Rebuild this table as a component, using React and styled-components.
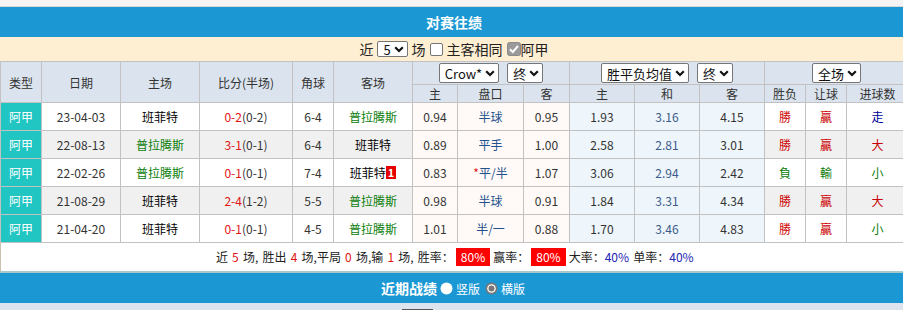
import React from "react";
import styled, { createGlobalStyle } from "styled-components";

const Global = createGlobalStyle`
  html, body { margin: 0; padding: 0; background: #ffffff; overflow: hidden; }
  body { font-family: "Noto Sans CJK SC", "Noto Sans", sans-serif; font-size: 12px; color: #333; }
`;

const Page = styled.div`
  width: 908px;
`;

const TopGap = styled.div`
  height: 6px;
  background: #f4f4f4;
  border-bottom: 1px solid #d9d9d9;
`;

const BlueBar = styled.div`
  height: ${(p) => p.$h}px;
  background: #1b97d4;
  color: #fff;
  display: flex;
  align-items: center;
  justify-content: center;
  gap: 3px;
`;

const BarTitle = styled.span`
  font-size: 14px;
  font-weight: bold;
`;

const FilterBar = styled.div`
  height: 24px;
  background: #feefd3;
  display: flex;
  align-items: center;
  justify-content: center;
  font-size: 14px;
  color: #222;
  gap: 4px;
`;

const Sel = styled.span`
  display: inline-flex;
  align-items: center;
  justify-content: space-between;
  box-sizing: border-box;
  height: ${(p) => p.$h || 20}px;
  padding: 0 3px 0 5px;
  border: 1px solid #767676;
  border-radius: 2px;
  background: #fff;
  font-size: 13px;
  color: #111;
  gap: 3px;
  line-height: 1;
`;

const Chevron = () => (
  <svg width="10" height="7" viewBox="0 0 10 7">
    <path d="M1.2 1.3 L5 5 L8.8 1.3" fill="none" stroke="#111" strokeWidth="2.2" />
  </svg>
);

const Select = ({ children, h }) => (
  <Sel $h={h}>
    <span>{children}</span>
    <Chevron />
  </Sel>
);

const Box = styled.span`
  display: inline-block;
  width: 13px;
  height: 13px;
  box-sizing: border-box;
  border: 1px solid #767676;
  border-radius: 2px;
  background: #fff;
`;

const CheckedBox = () => (
  <svg width="14" height="14" viewBox="0 0 14 14">
    <rect x="0.5" y="0.5" width="13" height="13" rx="2" fill="#9a9a9a" stroke="#8a8a8a" />
    <path d="M3 7.2 L5.8 10 L11 4" fill="none" stroke="#fff" strokeWidth="2" />
  </svg>
);

const Table = styled.table`
  border-collapse: collapse;
  table-layout: fixed;
  width: 908px;
  border-left: 1px solid #b9b9b9;
`;

const HRow = styled.tr`
  height: ${(p) => p.$h}px;
`;

const Th = styled.th`
  background: #dbe4ee;
  border: 1px solid #c2c2c2;
  font-weight: normal;
  font-size: 12px;
  color: #333;
  padding: 0;
  text-align: center;
  vertical-align: middle;
`;

const SelGroup = styled.div`
  display: flex;
  justify-content: center;
  gap: 8px;
`;

const Row = styled.tr`
  height: 28px;
`;

const Td = styled.td`
  border: 1px solid #c2c2c2;
  padding: 0;
  text-align: center;
  vertical-align: middle;
  font-size: 12px;
  color: ${(p) => p.$c || "#333"};
  background: ${(p) => p.$bg || (p.$alt ? "#f0f0f0" : "#ffffff")};
  white-space: nowrap;
`;

const TypeTd = styled(Td)`
  background: #21c5c2;
  color: #fff;
`;

const Red = styled.span`
  color: #e31313;
`;

const Star = styled.span`
  color: #e31313;
`;

const Card = styled.span`
  display: inline-block;
  background: #e60000;
  color: #fff;
  font-weight: bold;
  font-size: 11px;
  line-height: 13px;
  padding: 0 2px;
  vertical-align: 1px;
`;

const SummaryTd = styled.td`
  height: 28px;
  padding: 0;
  text-align: center;
  vertical-align: middle;
  font-size: 12px;
  color: #222;
  word-spacing: 1.5px;
  border-left: 1px solid #c9c2ae;
  border-bottom: 2px solid #a7c7c9;
`;

const Num = styled.span`
  color: #e31313;
`;

const Rate = styled.span`
  display: inline-block;
  background: #ff0000;
  color: #fff;
  padding: 0 5px;
  line-height: 18px;
  margin: 0 3px 0 2px;
`;

const Blue = styled.span`
  color: #1b25b5;
`;

const RadioLabel = styled.span`
  font-size: 12px;
  margin-right: 2px;
`;

const Radio = ({ checked }) =>
  checked ? (
    <svg width="13" height="13" viewBox="0 0 13 13">
      <circle cx="6.5" cy="6.5" r="6" fill="#777" />
      <circle cx="6.5" cy="6.5" r="4.3" fill="#fff" />
      <circle cx="6.5" cy="6.5" r="3" fill="#777" />
    </svg>
  ) : (
    <svg width="13" height="13" viewBox="0 0 13 13">
      <circle cx="6.5" cy="6.5" r="6" fill="#fff" />
    </svg>
  );

const Bottom = styled.div`
  height: 12px;
  background: #dde4ee;
  position: relative;
`;

const BottomTab = styled.span`
  position: absolute;
  left: 402px;
  top: 6px;
  width: 31px;
  height: 10px;
  background: #fff;
  border: 1px solid #555;
  box-sizing: border-box;
`;

const cols = [41, 79, 79, 93, 41, 79, 45, 66, 46, 65, 65, 65, 41, 41, 62];

const GREEN = "#0b7d0b";
const RC = "#cc0000";
const NAVY = "#000099";
const PINK = "#fffaf7";
const LBLUE = "#eef6fb";

const rows = [
  { date: "23-04-03", home: "班菲特", score: "0-2", half: "(0-2)", corner: "6-4", away: "普拉腾斯", o: ["0.94", "半球", "0.95"], e: ["1.93", "3.16", "4.15"], r: [["勝", RC], ["贏", RC], ["走", NAVY]] },
  { date: "22-08-13", home: "普拉腾斯", score: "3-1", half: "(0-1)", corner: "6-4", away: "班菲特", o: ["0.89", "平手", "1.00"], e: ["2.58", "2.81", "3.01"], r: [["勝", RC], ["贏", RC], ["大", RC]] },
  { date: "22-02-26", home: "普拉腾斯", score: "0-1", half: "(0-1)", corner: "7-4", away: "班菲特", card: "1", star: true, o: ["0.83", "平/半", "1.07"], e: ["3.06", "2.94", "2.42"], r: [["負", GREEN], ["輸", GREEN], ["小", GREEN]] },
  { date: "21-08-29", home: "班菲特", score: "2-4", half: "(1-2)", corner: "5-5", away: "普拉腾斯", o: ["0.98", "半球", "0.91"], e: ["1.84", "3.31", "4.34"], r: [["勝", RC], ["贏", RC], ["大", RC]] },
  { date: "21-04-20", home: "班菲特", score: "0-1", half: "(0-1)", corner: "4-5", away: "普拉腾斯", o: ["1.01", "半/一", "0.88"], e: ["1.70", "3.46", "4.83"], r: [["勝", RC], ["贏", RC], ["小", GREEN]] },
];

const teamColor = (t) => (t === "普拉腾斯" ? GREEN : "#000");

export default function App() {
  return (
    <Page>
      <Global />
      <TopGap />
      <BlueBar $h={30}>
        <BarTitle>对赛往绩</BarTitle>
      </BlueBar>
      <FilterBar>
        <span>近</span>
        <Select h={16}>5</Select>
        <span>场</span>
        <Box />
        <span>主客相同</span>
        <CheckedBox />
        <span style={{ marginLeft: -4 }}>阿甲</span>
      </FilterBar>
      <Table>
        <colgroup>
          {cols.map((w, i) => (
            <col key={i} style={{ width: w }} />
          ))}
        </colgroup>
        <thead>
          <HRow $h={23}>
            <Th rowSpan={2}>类型</Th>
            <Th rowSpan={2}>日期</Th>
            <Th rowSpan={2}>主场</Th>
            <Th rowSpan={2}>比分(半场)</Th>
            <Th rowSpan={2}>角球</Th>
            <Th rowSpan={2}>客场</Th>
            <Th colSpan={3}>
              <SelGroup>
                <Select>Crow*</Select>
                <Select>终</Select>
              </SelGroup>
            </Th>
            <Th colSpan={3}>
              <SelGroup>
                <Select>胜平负均值</Select>
                <Select>终</Select>
              </SelGroup>
            </Th>
            <Th colSpan={3}>
              <SelGroup>
                <Select>全场</Select>
              </SelGroup>
            </Th>
          </HRow>
          <HRow $h={18}>
            <Th>主</Th>
            <Th>盘口</Th>
            <Th>客</Th>
            <Th>主</Th>
            <Th>和</Th>
            <Th>客</Th>
            <Th>胜负</Th>
            <Th>让球</Th>
            <Th>进球数</Th>
          </HRow>
        </thead>
        <tbody>
          {rows.map((r, i) => {
            const alt = i % 2 === 1;
            return (
              <Row key={r.date}>
                <TypeTd>阿甲</TypeTd>
                <Td $alt={alt}>{r.date}</Td>
                <Td $alt={alt} $c={teamColor(r.home)}>{r.home}</Td>
                <Td $alt={alt}>
                  <Red>{r.score}</Red>
                  {r.half}
                </Td>
                <Td $alt={alt}>{r.corner}</Td>
                <Td $alt={alt} $c={teamColor(r.away)}>
                  {r.away}
                  {r.card && <Card>{r.card}</Card>}
                </Td>
                <Td $bg={PINK}>{r.o[0]}</Td>
                <Td $bg={PINK} $c="#24508c">
                  {r.star && <Star>*</Star>}
                  {r.o[1]}
                </Td>
                <Td $bg={PINK}>{r.o[2]}</Td>
                <Td $bg={LBLUE}>{r.e[0]}</Td>
                <Td $bg={LBLUE} $c="#3c5a8a">{r.e[1]}</Td>
                <Td $bg={LBLUE}>{r.e[2]}</Td>
                {r.r.map(([t, c], j) => (
                  <Td key={j} $alt={alt} $c={c}>{t}</Td>
                ))}
              </Row>
            );
          })}
          <tr>
            <SummaryTd colSpan={15}>
              近 <Num>5</Num> 场, 胜出 <Num>4</Num> 场,平局 <Num>0</Num> 场,输 <Num>1</Num> 场, 胜率：
              <Rate>80%</Rate>赢率：<Rate>80%</Rate>大率：<Blue>40%</Blue> 单率：<Blue>40%</Blue>
            </SummaryTd>
          </tr>
        </tbody>
      </Table>
      <BlueBar $h={30}>
        <BarTitle>近期战绩</BarTitle>
        <Radio />
        <RadioLabel>竖版</RadioLabel>
        <Radio checked />
        <RadioLabel>横版</RadioLabel>
      </BlueBar>
      <Bottom>
        <BottomTab />
      </Bottom>
    </Page>
  );
}
